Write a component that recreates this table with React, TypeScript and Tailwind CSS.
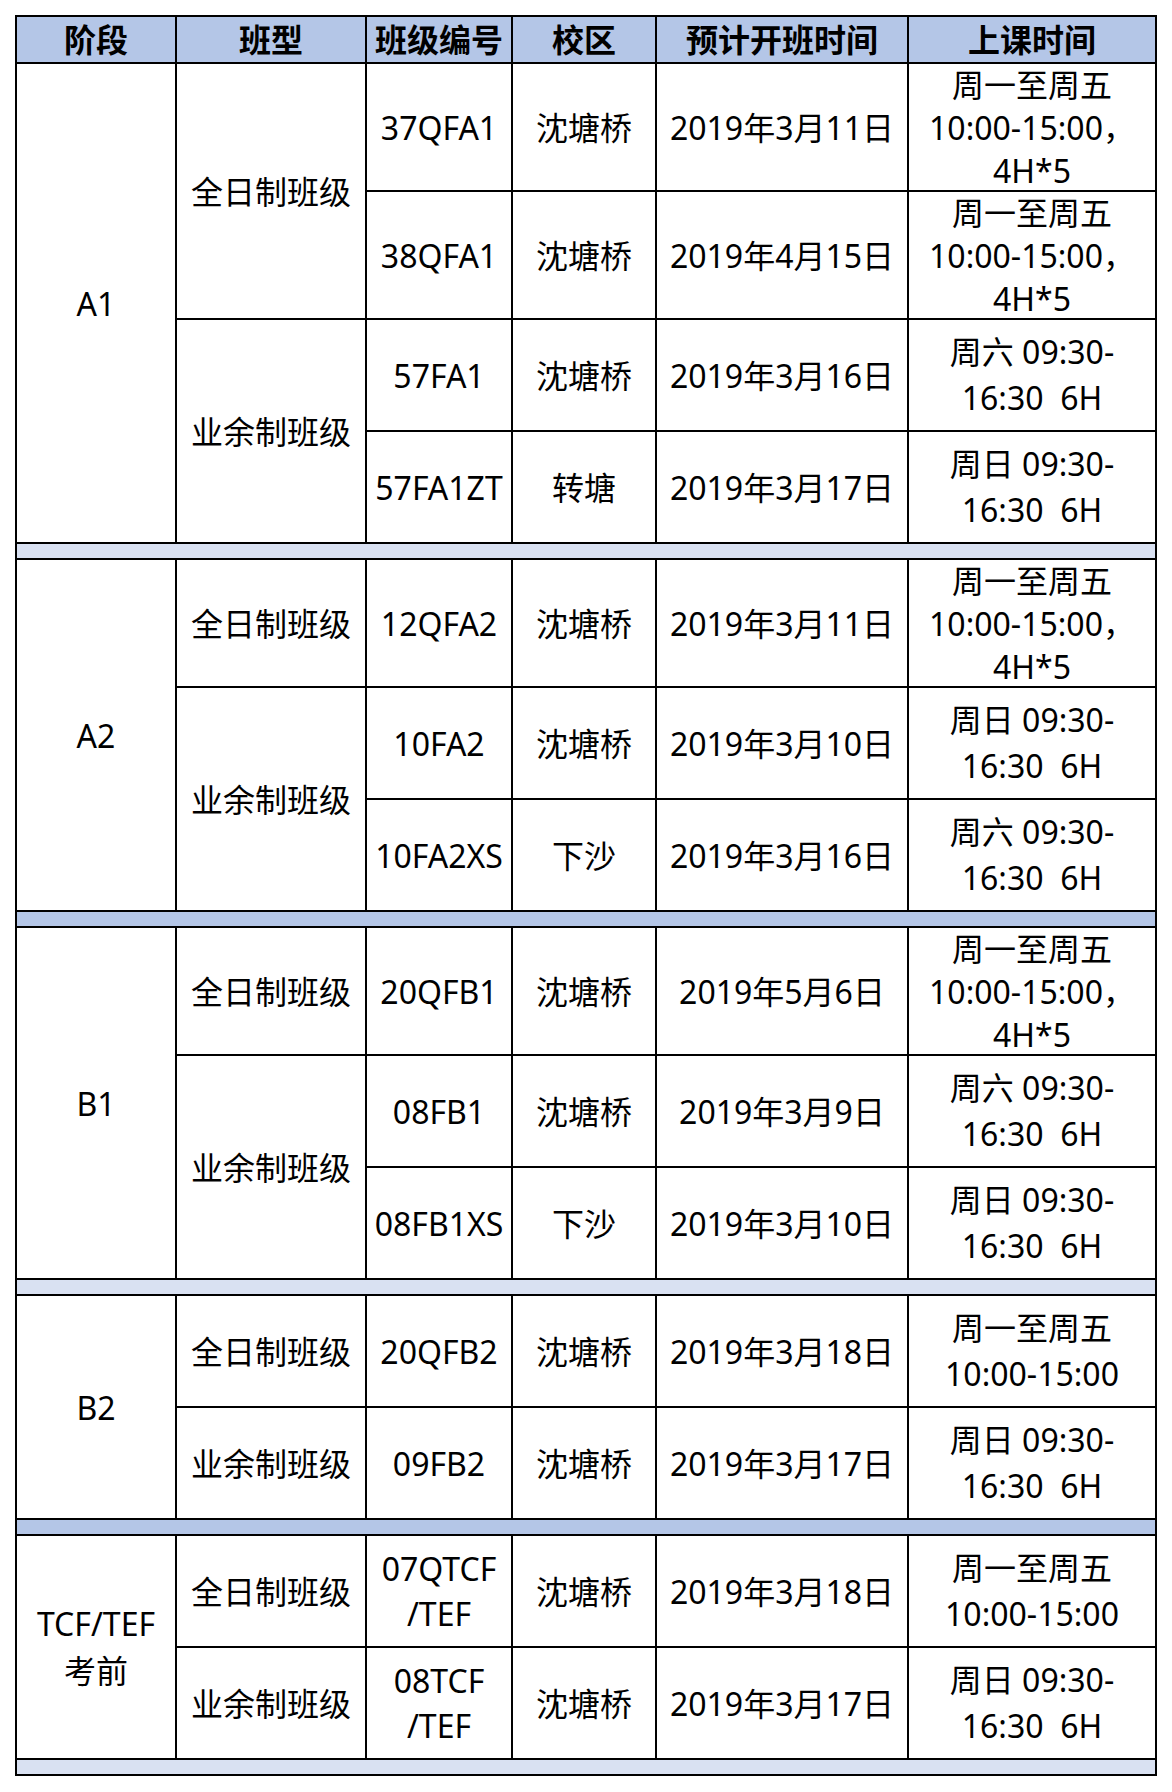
import React from 'react';

type Row = {
  code: string[];
  campus: string;
  date: string;
  time: string[];
};

type Kind = { type: string; rows: Row[] };

type Group = { stage: string[]; kinds: Kind[]; band: 'light' | 'dark' };

const FULL3 = ['周一至周五', '10:00-15:00，', '4H*5'];
const FULL2 = ['周一至周五', '10:00-15:00'];
const SAT = ['周六 09:30-', '16:30  6H'];
const SUN = ['周日 09:30-', '16:30  6H'];

const groups: Group[] = [
  {
    stage: ['A1'],
    band: 'light',
    kinds: [
      {
        type: '全日制班级',
        rows: [
          { code: ['37QFA1'], campus: '沈塘桥', date: '2019年3月11日', time: FULL3 },
          { code: ['38QFA1'], campus: '沈塘桥', date: '2019年4月15日', time: FULL3 },
        ],
      },
      {
        type: '业余制班级',
        rows: [
          { code: ['57FA1'], campus: '沈塘桥', date: '2019年3月16日', time: SAT },
          { code: ['57FA1ZT'], campus: '转塘', date: '2019年3月17日', time: SUN },
        ],
      },
    ],
  },
  {
    stage: ['A2'],
    band: 'dark',
    kinds: [
      {
        type: '全日制班级',
        rows: [{ code: ['12QFA2'], campus: '沈塘桥', date: '2019年3月11日', time: FULL3 }],
      },
      {
        type: '业余制班级',
        rows: [
          { code: ['10FA2'], campus: '沈塘桥', date: '2019年3月10日', time: SUN },
          { code: ['10FA2XS'], campus: '下沙', date: '2019年3月16日', time: SAT },
        ],
      },
    ],
  },
  {
    stage: ['B1'],
    band: 'light',
    kinds: [
      {
        type: '全日制班级',
        rows: [{ code: ['20QFB1'], campus: '沈塘桥', date: '2019年5月6日', time: FULL3 }],
      },
      {
        type: '业余制班级',
        rows: [
          { code: ['08FB1'], campus: '沈塘桥', date: '2019年3月9日', time: SAT },
          { code: ['08FB1XS'], campus: '下沙', date: '2019年3月10日', time: SUN },
        ],
      },
    ],
  },
  {
    stage: ['B2'],
    band: 'dark',
    kinds: [
      {
        type: '全日制班级',
        rows: [{ code: ['20QFB2'], campus: '沈塘桥', date: '2019年3月18日', time: FULL2 }],
      },
      {
        type: '业余制班级',
        rows: [{ code: ['09FB2'], campus: '沈塘桥', date: '2019年3月17日', time: SUN }],
      },
    ],
  },
  {
    stage: ['TCF/TEF', '考前'],
    band: 'light',
    kinds: [
      {
        type: '全日制班级',
        rows: [{ code: ['07QTCF', '/TEF'], campus: '沈塘桥', date: '2019年3月18日', time: FULL2 }],
      },
      {
        type: '业余制班级',
        rows: [{ code: ['08TCF', '/TEF'], campus: '沈塘桥', date: '2019年3月17日', time: SUN }],
      },
    ],
  },
];

const SPAN: Record<number, string> = {
  1: 'row-span-1',
  2: 'row-span-2',
  3: 'row-span-3',
  4: 'row-span-4',
};

const headers = ['阶段', '班型', '班级编号', '校区', '预计开班时间', '上课时间'];

function Cell({ lines, className = '', leading = 'leading-[45px]' }: { lines: string[]; className?: string; leading?: string }) {
  return (
    <div className={`bg-white flex flex-col items-center justify-center text-center whitespace-pre ${leading} ${className}`}>
      {lines.map((l, i) => (
        <span key={i}>{l}</span>
      ))}
    </div>
  );
}

export default function App() {
  return (
    <div
      className="min-h-[1792px] bg-white pt-[15px] pl-[15px] text-black text-[32px]"
      style={{ fontFamily: '"Noto Sans", "Noto Sans CJK SC", sans-serif' }}
    >
      <div className="grid w-fit grid-cols-[158px_188px_144px_142px_250px_246px] gap-[2px] border-2 border-black bg-black">
        {headers.map(h => (
          <div key={h} className="h-[45px] bg-[#b4c6e7] flex items-center justify-center font-bold leading-none">
            {h}
          </div>
        ))}

        {groups.map((g, gi) => {
          const total = g.kinds.reduce((n, k) => n + k.rows.length, 0);
          return (
            <React.Fragment key={gi}>
              <Cell lines={g.stage} className={`col-start-1 ${SPAN[total]}`} leading="leading-[47px]" />
              {g.kinds.map((k, ki) => (
                <React.Fragment key={ki}>
                  <Cell lines={[k.type]} className={`col-start-2 ${SPAN[k.rows.length]}`} />
                  {k.rows.map((r, ri) => {
                    const tall = r.time.length === 3;
                    const h = tall ? 'h-[126px]' : 'h-[110px]';
                    return (
                      <React.Fragment key={ri}>
                        <Cell lines={r.code} className={`col-start-3 ${h}`} />
                        <Cell lines={[r.campus]} className={h} />
                        <Cell lines={[r.date]} className={h} />
                        <Cell lines={r.time} className={h} leading={tall ? 'leading-[43px]' : 'leading-[46px]'} />
                      </React.Fragment>
                    );
                  })}
                </React.Fragment>
              ))}
              <div className={`col-span-6 h-[14px] ${g.band === 'light' ? 'bg-[#d9e1f2]' : 'bg-[#b4c6e7]'}`} />
            </React.Fragment>
          );
        })}
      </div>
    </div>
  );
}
